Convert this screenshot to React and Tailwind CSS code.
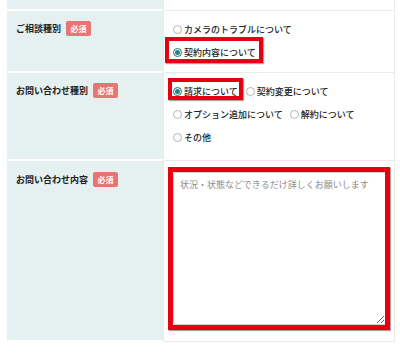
import React from "react";

const Badge = () => (
  <span className="inline-flex items-center justify-center w-[25px] h-[15px] rounded-[2px] bg-[#e87575] text-white text-[8px] font-bold leading-none">
    必須
  </span>
);

const Radio = ({ checked }) =>
  checked ? (
    <span className="flex items-center justify-center w-[9px] h-[9px] rounded-full border border-[#1e7373] bg-white shrink-0">
      <span className="w-[5px] h-[5px] rounded-full bg-[#218585]" />
    </span>
  ) : (
    <span className="w-[9px] h-[9px] rounded-full border border-[#b5b5b5] bg-white shrink-0" />
  );

const Option = ({ label, checked, children, className = "" }) => (
  <span className={"relative inline-flex items-center h-[23px] gap-[2px] " + className}>
    <Radio checked={checked} />
    <span className="whitespace-nowrap font-medium">{label}</span>
    {children}
  </span>
);

const Label = ({ text }) => (
  <div className="flex items-center gap-[5px] pl-[9px] pt-[10px] h-[15px] box-content">
    <span className="font-bold">{text}</span>
    <Badge />
  </div>
);

export default function App() {
  return (
    <div className="w-[400px] h-[353px] bg-white text-[#222] text-[9px] leading-[13px] font-['Noto_Sans_CJK_JP',_'Noto_Sans',_sans-serif]">
      <div className="ml-[7px] w-[388px] flex flex-col">
        {/* row 1 */}
        <div className="flex h-[11px]">
          <div className="w-[156px] bg-[#e5f1f1] border-b-2 border-white" />
          <div className="flex-1 border-x border-b border-[#ebebeb]" />
        </div>
        {/* row 2 */}
        <div className="flex h-[62px]">
          <div className="w-[156px] bg-[#e5f1f1] border-b-2 border-white">
            <Label text="ご相談種別" />
          </div>
          <div className="flex-1 border-x border-b border-[#ebebeb] pl-[9px] pt-[7px] flex flex-col items-start">
            <Option label="カメラのトラブルについて" />
            <Option label="契約内容について" checked>
              <span className="absolute left-[-8px] right-[-7px] top-[-4px] bottom-[1px] border-4 border-[#e50012] shadow-[1px_1px_1px_rgba(0,0,0,0.35)]" />
            </Option>
          </div>
        </div>
        {/* row 3 */}
        <div className="flex h-[88px]">
          <div className="w-[156px] bg-[#e5f1f1] border-b-2 border-white">
            <Label text="お問い合わせ種別" />
          </div>
          <div className="flex-1 border-x border-b border-[#ebebeb] pl-[9px] pt-[7px] flex flex-col items-start">
            <div className="flex">
              <Option label="請求について" checked className="mr-[8px]">
                <span className="absolute left-[-5px] right-[-5px] top-[-2px] bottom-[3px] border-4 border-[#e50012] shadow-[1px_1px_1px_rgba(0,0,0,0.35)]" />
              </Option>
              <Option label="契約変更について" />
            </div>
            <div className="flex">
              <Option label="オプション追加について" className="mr-[7px]" />
              <Option label="解約について" />
            </div>
            <Option label="その他" />
          </div>
        </div>
        {/* row 4 */}
        <div className="flex h-[181px]">
          <div className="w-[156px] bg-[#e5f1f1] border-b-2 border-white">
            <div className="pt-[1px]">
              <Label text="お問い合わせ内容" />
            </div>
          </div>
          <div className="flex-1 border-x border-b border-[#ebebeb] pl-[9px] pt-[11px]">
            <div className="relative w-[213px] h-[153px]">
              <textarea
                className="block w-full h-full rounded-[3px] border border-[#cfcfcf] bg-white px-[6px] pt-[5px] text-[9px] leading-[13px] text-[#333] placeholder:text-[#8d8d8d] outline-none font-['Noto_Sans_CJK_JP',_sans-serif]"
                placeholder="状況・状態などできるだけ詳しくお願いします"
              />
              <span className="pointer-events-none absolute left-[-5px] right-[-4px] top-[-5px] bottom-[-5px] border-[5px] border-[#e50012] shadow-[1px_1px_1px_rgba(0,0,0,0.35)]" />
            </div>
          </div>
        </div>
      </div>
    </div>
  );
}
